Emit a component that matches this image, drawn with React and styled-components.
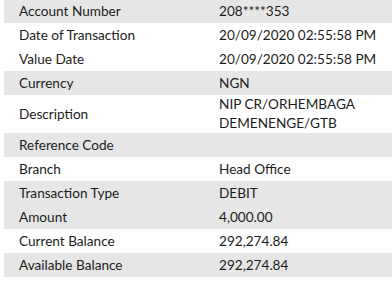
import React from 'react';
import styled, { createGlobalStyle } from 'styled-components';

const GlobalStyle = createGlobalStyle`
  html, body {
    margin: 0;
    padding: 0;
    background: #ffffff;
  }
  body {
    font-family: Lato, "Liberation Sans", Arial, sans-serif;
  }
`;

const rows = [
  { label: 'Account Number', value: '208****353', shaded: true },
  { label: 'Date of Transaction', value: '20/09/2020 02:55:58 PM' },
  { label: 'Value Date', value: '20/09/2020 02:55:58 PM' },
  { label: 'Currency', value: 'NGN', shaded: true },
  { label: 'Description', value: ['NIP CR/ORHEMBAGA', 'DEMENENGE/GTB'] },
  { label: 'Reference Code', value: '', shaded: true },
  { label: 'Branch', value: 'Head Office' },
  { label: 'Transaction Type', value: 'DEBIT', shaded: true },
  { label: 'Amount', value: '4,000.00', shaded: true },
  { label: 'Current Balance', value: '292,274.84' },
  { label: 'Available Balance', value: '292,274.84', shaded: true },
];

const Details = styled.div`
  margin: -1px 0 0 4px;
  display: flex;
  flex-direction: column;
`;

const Row = styled.div`
  display: grid;
  grid-template-columns: 215px 1fr;
  align-items: center;
  min-height: 24px;
  background: ${(p) => (p.$shaded ? '#e6e6e6' : '#ffffff')};
  color: #1c1c1c;
  font-size: 13.6px;
`;

const Label = styled.div`
  padding-left: 15px;
`;

const Value = styled.div`
  line-height: ${(p) => (p.$multi ? '19px' : 'normal')};
`;

const TransactionDetails = () => (
  <Details>
    {rows.map((row) => (
      <Row key={row.label} $shaded={row.shaded}>
        <Label>{row.label}</Label>
        {Array.isArray(row.value) ? (
          <Value $multi>
            {row.value.map((line) => (
              <div key={line}>{line}</div>
            ))}
          </Value>
        ) : (
          <Value>{row.value}</Value>
        )}
      </Row>
    ))}
  </Details>
);

export default function App() {
  return (
    <>
      <GlobalStyle />
      <TransactionDetails />
    </>
  );
}
